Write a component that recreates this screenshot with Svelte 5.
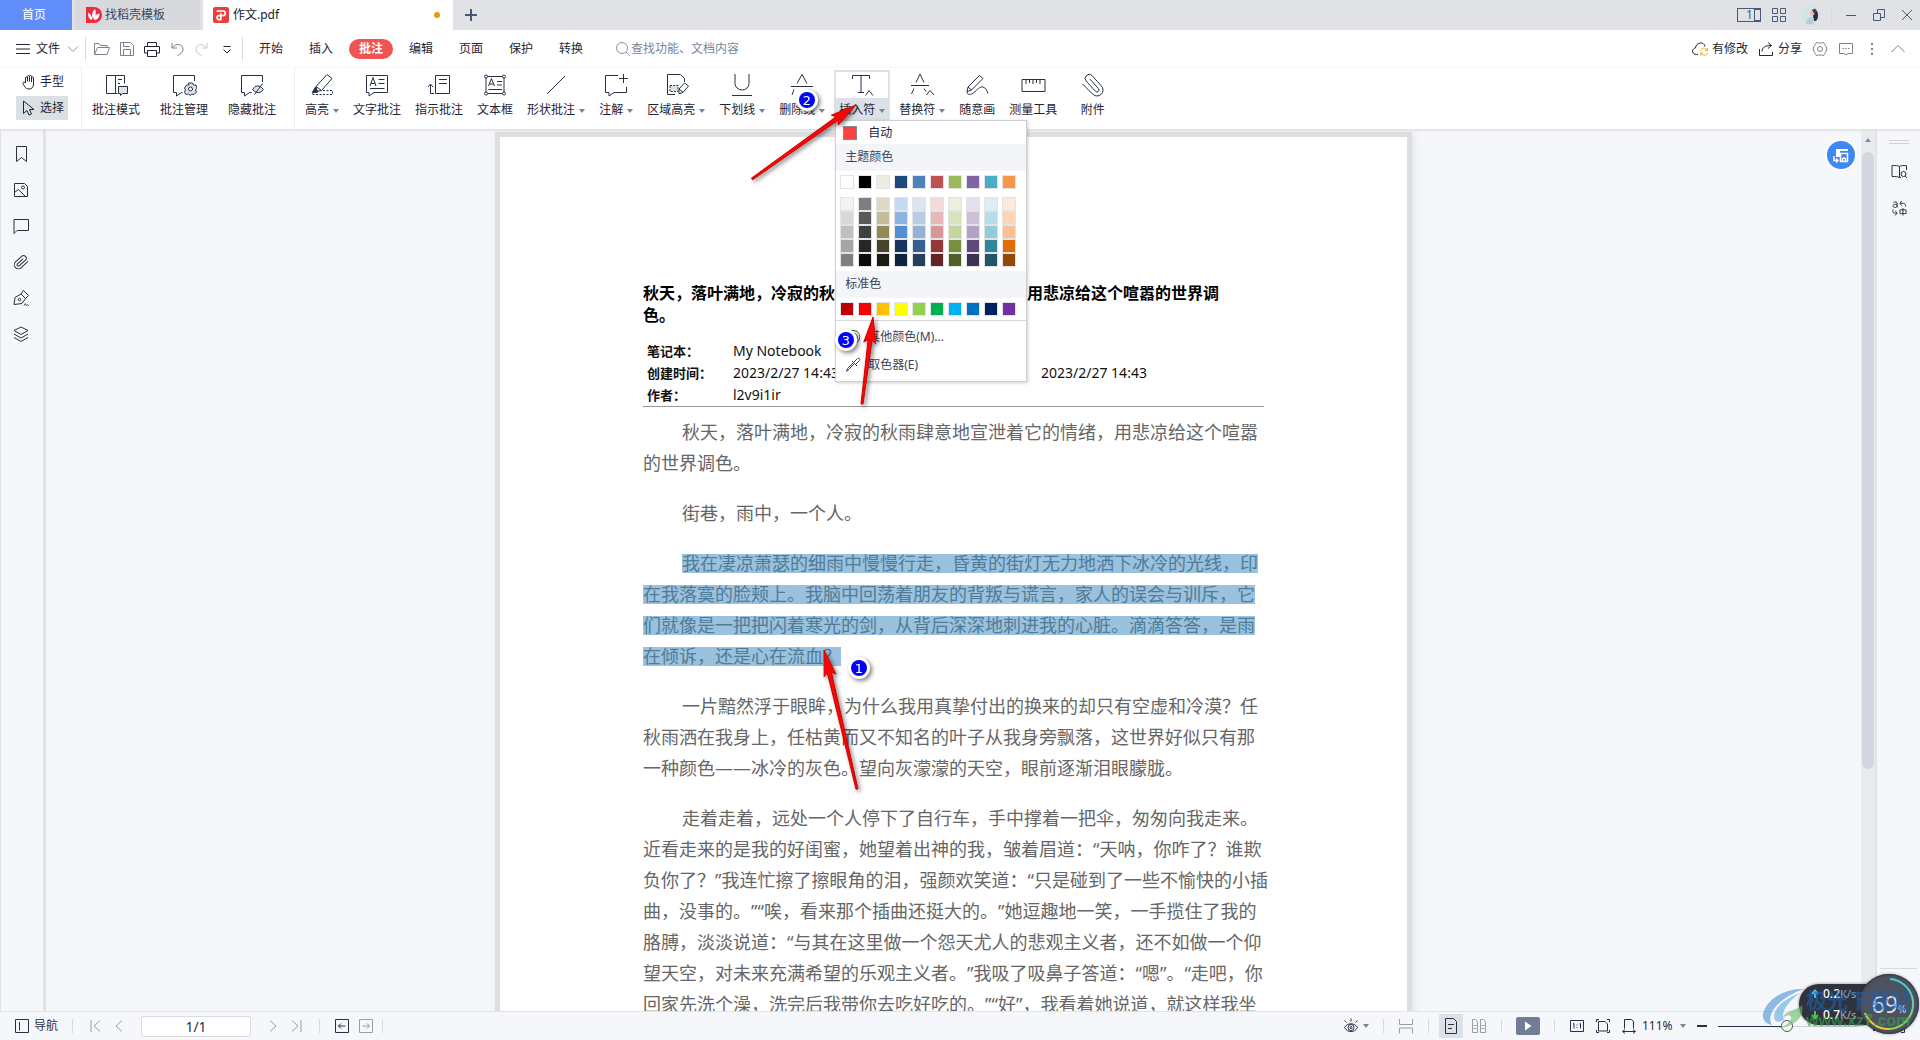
<script>
	let current = $state('批注');
	let tool = $state('选择');
	let picked = $state('插入符');
	let zoom = $state(49);

	const menus = ['开始', '插入', '批注', '编辑', '页面', '保护', '转换'];

	const modes = [
		{ name: '批注模式', icon: 'mode' },
		{ name: '批注管理', icon: 'manage' },
		{ name: '隐藏批注', icon: 'hide' }
	];

	const tools = [
		{ name: '高亮', icon: 'marker', caret: true },
		{ name: '文字批注', icon: 'textnote' },
		{ name: '指示批注', icon: 'pointnote' },
		{ name: '文本框', icon: 'textbox' },
		{ name: '形状批注', icon: 'line', caret: true },
		{ name: '注解', icon: 'addnote', caret: true },
		{ name: '区域高亮', icon: 'area', caret: true },
		{ name: '下划线', icon: 'underline', caret: true },
		{ name: '删除线', icon: 'strike', caret: true },
		{ name: '插入符', icon: 'caret', caret: true },
		{ name: '替换符', icon: 'replace', caret: true },
		{ name: '随意画', icon: 'draw' },
		{ name: '测量工具', icon: 'ruler' },
		{ name: '附件', icon: 'clip', wide: true }
	];

	const side = [
		{ name: '书签', icon: 'bookmark' },
		{ name: '缩略图', icon: 'image' },
		{ name: '批注列表', icon: 'comment' },
		{ name: '附件列表', icon: 'clipS' },
		{ name: '签名', icon: 'pen' },
		{ name: '图层', icon: 'layers' }
	];

	const theme = ['#ffffff', '#000000', '#eeece1', '#1f497d', '#4f81bd', '#c0504d', '#9bbb59', '#8064a2', '#4bacc6', '#f79646'];
	const shades = [
		['#f2f2f2', '#7f7f7f', '#ddd9c3', '#c6d9f0', '#dbe5f1', '#f2dcdb', '#ebf1dd', '#e5e0ec', '#dbeef3', '#fdeada'],
		['#d8d8d8', '#595959', '#c4bd97', '#8db3e2', '#b8cce4', '#e5b9b7', '#d7e3bc', '#ccc1d9', '#b7dde8', '#fbd5b5'],
		['#bfbfbf', '#3f3f3f', '#938953', '#548dd4', '#95b3d7', '#d99694', '#c3d69b', '#b2a2c7', '#92cddc', '#fac08f'],
		['#a5a5a5', '#262626', '#494429', '#17365d', '#366092', '#953734', '#76923c', '#5f497a', '#31859b', '#e36c09'],
		['#7f7f7f', '#0c0c0c', '#1d1b10', '#0f243e', '#244061', '#632423', '#4f6128', '#3f3151', '#205867', '#974806']
	];
	const standard = ['#c00000', '#ff0000', '#ffc000', '#ffff00', '#92d050', '#00b050', '#00b0f0', '#0070c0', '#002060', '#7030a0'];

	const paragraphs = [
		{ lines: ['秋天，落叶满地，冷寂的秋雨肆意地宣泄着它的情绪，用悲凉给这个喧嚣', '的世界调色。'] },
		{ lines: ['街巷，雨中，一个人。'] },
		{
			marked: true,
			lines: [
				'我在凄凉萧瑟的细雨中慢慢行走，昏黄的街灯无力地洒下冰冷的光线，印',
				'在我落寞的脸颊上。我脑中回荡着朋友的背叛与谎言，家人的误会与训斥，它',
				'们就像是一把把闪着寒光的剑，从背后深深地刺进我的心脏。滴滴答答，是雨',
				'在倾诉，还是心在流血？'
			]
		},
		{
			lines: [
				'一片黯然浮于眼眸，为什么我用真挚付出的换来的却只有空虚和冷漠？任',
				'秋雨洒在我身上，任枯黄而又不知名的叶子从我身旁飘落，这世界好似只有那',
				'一种颜色——冰冷的灰色。望向灰濛濛的天空，眼前逐渐泪眼朦胧。'
			]
		},
		{
			lines: [
				'走着走着，远处一个人停下了自行车，手中撑着一把伞，匆匆向我走来。',
				'近看走来的是我的好闺蜜，她望着出神的我，皱着眉道：“天呐，你咋了？谁欺',
				'负你了？”我连忙擦了擦眼角的泪，强颜欢笑道：“只是碰到了一些不愉快的小插',
				'曲，没事的。”“唉，看来那个插曲还挺大的。”她逗趣地一笑，一手揽住了我的',
				'胳膊，淡淡说道：“与其在这里做一个怨天尤人的悲观主义者，还不如做一个仰',
				'望天空，对未来充满希望的乐观主义者。”我吸了吸鼻子答道：“嗯”。“走吧，你',
				'回家先洗个澡，洗完后我带你去吃好吃的。”“好”，我看着她说道，就这样我坐'
			]
		}
	];

	const arrows = [
		{ x1: 752, y1: 179, x2: 856, y2: 105 },
		{ x1: 862, y1: 404, x2: 873, y2: 317 },
		{ x1: 857, y1: 789, x2: 824, y2: 650 }
	];
	const badges = [
		{ n: 1, x: 859, y: 668 },
		{ n: 2, x: 807, y: 100 },
		{ n: 3, x: 846, y: 340 }
	];

	// arrow outline: thin tail widening to the head
	function arrowPoints(a) {
		const len = Math.hypot(a.x2 - a.x1, a.y2 - a.y1);
		const ux = (a.x2 - a.x1) / len;
		const uy = (a.y2 - a.y1) / len;
		const at = (d, s) => `${a.x2 - ux * d - uy * s},${a.y2 - uy * d + ux * s}`;
		return [at(0, 0), at(26, 6), at(23, 2), at(len, 1), at(len, -1), at(23, -2), at(26, -6)].join(' ');
	}

	const icons = {
		mode: '<path d="M13.5 20.5H2.5v-18h9v18M11.5 2.5h9v8"/><path d="M14 6.5h4M14 10.5h2"/><path d="M14.500 13.5h9v7h-5l-2 2v-2h-2z" fill="#dde3e9"/>',
		manage: '<path d="M22.500 8V2.5h-21v17h3v3.500l5-3.500h1"/><path d="M16.500 10h4l1 2 2.500.2 1 3-1.500 1.800 1 2-2.500 2.500-2.300-.5-1.200 1.500-2-1.500-2.500.500-1.500-2.500 1-2-1-2 2-2.800 2.200-.2z" fill="#dde3e9"/><circle cx="18.500" cy="16" r="2" fill="#fff"/>',
		hide: '<path d="M22.500 9V2.500h-21v17h3v3.500l5-3.500h2"/><path d="M12.500 16.500q5-7.500 11 0q-5 6.500-11 0z" fill="#dde3e9"/><path d="M22.500 10.500l-8 11"/>',
		marker: '<path d="M6 13.500L17 1.500l5 4-10.500 12-5 1z"/><path d="M6 13.500l5.500 4"/><path d="M5.500 14L2 20l6-1z" fill="#283044"/><path d="M13 17.500h9.500v4H1" stroke-dasharray="2 1.500"/>',
		textnote: '<path d="M1.500 2.500h21v17H9l-5 3.500v-3.500H1.500z"/><path d="M5 13l3-8.500 3 8.500M6 10.500h4M13.500 6.500h6M13.500 10.500h6M5 15.500h14.500"/>',
		pointnote: '<path d="M8.500 2.500h14v18h-14zM12 6.500h8M12 10.500h8M7 20.500H3.500v-9M1 14l2.500-3L6 14"/>',
		textbox: '<path d="M3 3.500h18v17H3z"/><path d="M5.500 13l3-7.500 3 7.500M6.500 11h4M14 8.500h5M14 12h5M5.500 16.500H19"/><g fill="#fff"><circle cx="3" cy="3.500" r="1.500"/><circle cx="21" cy="3.500" r="1.500"/><circle cx="3" cy="20.500" r="1.500"/><circle cx="21" cy="20.500" r="1.500"/></g>',
		line: '<path d="M3 21L21 3"/>',
		addnote: '<path d="M14 2.500H1.500v17h3.500v3.500l5-3.500h12.500V14M15 5.500h9M19.500 1v9"/>',
		area: '<path d="M11 21.500H3.500v-20h13l4 4V9"/><path d="M6 12.500h8v6H6z" fill="#dde3e9" stroke-dasharray="2 1.200"/><path d="M15 16l5.500-6 4 3-5.500 6.500-4 1.200zM15 16l4 3.200" fill="#fff"/>',
		underline: '<path d="M5 1v9.500a7 6.500 0 0014 0V1M2 22.500h20"/>',
		strike: '<path d="M7 10.500l5-9 5 9M1 13.500h22M4 16.500L2 22M20 16.500l2 5.500"/>',
		caret: '<path d="M2.500 6V2.500h17V6M11 2.500v17M8 19.500h6M15.500 22.500l3.500-5 4 5"/>',
		replace: '<path d="M6 9.500l4-8.500 4 8.500M1 12.500h18M4 15.500L1.500 21M14 15.500l2 3M16.500 22l3.500-4.500 4 4.500"/>',
		draw: '<path d="M3 14L14.500 2.500l3.500 3L6.500 17 2 18.500zM3 14l3.500 3"/><path d="M2 18.500c0 4 4 3.500 7 1s6-6.500 9-5.500 3.500 3 5 6.500"/>',
		ruler: '<path d="M1 6.500h23v12H1zM5 7v4M8.500 7v3M12 7v4M15.500 7v3M19 7v4"/>',
		clip: '<path transform="matrix(-1 0 0 1 25 0)" d="M22.400 11.050l-10.150 10.190a6 6 0 01-8.490-8.490l9.190-10.190a4 4 0 015.660 5.660l-9.200 10.190a2 2 0 01-2.830-2.830l8.490-9.480"/>'
	};

	// 16px set
	const small = {
		hand: '<path d="M4.500 9V4a1 1 0 012 0V2.500a1 1 0 012 0v0a1 1 0 012 0V4a1 1 0 012 0v6c0 3-1.500 5-4.500 5S4 13.500 2 9.500c-.500-1.500 1.500-2 2.500-.500zM6.500 3v4.500M8.500 3v4.500M10.500 4v4"/>',
		arrow: '<path d="M2.500 1v12.500l3.500-3 2 4.500 2.500-1-2-4.500h4.500z"/>',
		folder: '<path d="M.500 13V2.500h4.500l1.500 2h6.500v2M.500 13.500l3-7h12l-2.500 7z"/>',
		save: '<path d="M1.500 1.500h10l3 3v10h-13zM4.500 14V8.500h7V14M4.500 2v3.500h6"/>',
		print: '<path d="M3.500 5V1.500h9V5M3.500 12H.500V5.500h15V12h-3M3.500 9.500h9v6h-9z"/>',
		undo: '<path d="M3 2v5h5M3 7c4-5.500 11-4 11 1 0 3-2 5-5.500 6.500"/>',
		redo: '<path d="M13 2v5H8M13 7C9 1.500 2 3 2 8c0 3 2 5 5.500 6.500"/>',
		more: '<path d="M4.500 5.500h7M4.500 8.500l3.500 3.500 3.500-3.500"/>',
		search: '<circle cx="7" cy="7" r="5.500"/><path d="M11 11l4 4"/>',
		cloud: '<path d="M6 13.500H4.500c-5 0-5-6-1-6.500C4 1 12 0 13 5.500"/><path d="M8.500 9.500c1-3 5.500-3 6.500-.500M15.500 7v2.500H13M15.500 12c-1 3-5.500 3-6.500.500M8.500 14.500V12H11" stroke="#f5a623"/>',
		share: '<path d="M1.500 8v6.500h13V11M4 10.500c0-4 3-6 9-6M10 1.500l3.500 3-3.500 3"/>',
		gear: '<path d="M4.500 1.500l2 .500h3l2-.500 2 3 1.500 3.500-1.500 3.500-2 3-2-.500h-3l-2 .500-2-3L1 8l1.500-3.500z"/><circle cx="8" cy="8" r="2.500"/>',
		talk: '<path d="M1.500 2.500h13v10H10l-2 1.500-2-1.500H1.500zM4.500 7.500h1.500M7.200 7.500h1.500M10 7.500h1.500"/>',
		dots: '<path d="M8 2v2M8 7v2M8 12v2" stroke-width="2"/>',
		up: '<path d="M1.500 11L8 4.500l6.500 6.500"/>',
		bookmark: '<path d="M3.500.500h10v15l-5-4-5 4z"/>',
		image: '<path d="M1.500 1.500h10l3 3v10h-13zM2 10l3.500-2.500 7 7"/><circle cx="10" cy="5.500" r="1.500"/>',
		comment: '<path d="M1 1.500h14.500v11H4L1 15.500z"/>',
		clipS: '<path transform="scale(.67)" stroke-width="1.500" d="M22.400 11.050l-10.150 9.190a6 6 0 01-8.490-8.490l9.190-8.190a4 4 0 015.660 5.660l-9.200 8.190a2 2 0 01-2.830-2.830l8.490-7.480"/>',
		pen: '<path d="M1 14.500l1-7 6-3.500 4.500 4.500-3.500 5zM8 4l2.500-3.500 5 5L12.500 8.500M11 15.500c2-4 1.500 0 2.500 0s1-2 2 0"/><circle cx="6.500" cy="9.500" r="1.200"/>',
		layers: '<path d="M8 1l7 3.500-7 4-7-4zM1 8l7 4 7-4M1 11.500l7 4 7-4"/>',
		book: '<path d="M8.500 13.500c-2-1-4-1-7.500-1V1.500c3.500 0 6 0 7.500 1zM8.500 2.500C10 1.500 12 1.500 15.500 1.500V6M8.500 13.500h1.500"/><circle cx="12.500" cy="10" r="2.500"/><path d="M14 12l2 2"/>',
		nav: '<path d="M1.500 1.500h13v13h-13zM5.500 4v8.500"/>',
		first: '<path d="M4 2v12M13 2.500L7 8l6 5.500"/>',
		prev: '<path d="M11 2.500L5 8l6 5.500"/>',
		next: '<path d="M5 2.500L11 8l-6 5.500"/>',
		last: '<path d="M12 2v12M3 2.500L9 8l-6 5.500"/>',
		back: '<path d="M1.500 1.500h13v13h-13zM11.500 8h-7M7 5.500L4.500 8 7 10.500"/>',
		forward: '<path d="M1.500 1.500h13v13h-13zM4.500 8h7M9 5.500l2.500 2.500L9 10.500"/>',
		eye: '<path d="M1.500 9.500c3-5 10-5 13 0-3 5.500-10 5.500-13 0zM8 3.500V.500M3.500 4.500l-2-2M12.500 4.500l2-2"/><circle cx="8" cy="9.500" r="3"/><circle cx="8" cy="9.500" r="1"/>',
		breaks: '<path d="M1.500 1v5.500h13V1M1.500 15.500V10h13v5.500"/>',
		single: '<path d="M2.500.500h8l3 3v12h-11zM5 6.500h6M5 10.500h4"/>',
		double: '<path d="M1.500 1.500h3l2 2v11h-5zM9.500 1.500h3l2 2v11h-5zM2.500 7.500h3M2.500 10.500h3M10.500 7.500h3M10.500 10.500h3"/>',
		actual: '<path d="M1.500 2.500h13v11h-13zM4 6l1-.500v5M10.500 6l1-.500v5M8 6.500v1M8 9v1"/>',
		fit: '<path d="M3.500 3.500h6.500l2.500 2.500v7h-9zM1.500 4V1.500H4M12 1.500h2.500V4M1.500 12v2.500H4M12 14.500h2.500V12"/>',
		width: '<path d="M3.500 10.500v-9h7l2 2v7M2 13.500h12M4 11.500l-2.500 2L4 15.500M12 11.500l2.500 2-2.500 2"/>',
		minus: '<path d="M3 8h10" stroke-width="2"/>',
		plus: '<path d="M3 8h10M8 3v10" stroke-width="2"/>',
		full: '<path d="M1.500 5V1.500H5M11 1.500h3.500V5M1.500 11v3.500H5M11 14.500h3.500V11M9 7l4-4M7 9l-4 4"/>',
		grid: '<path d="M1.500 1.500h5v5h-5zM9.500 1.500h5v5h-5zM1.500 9.500h5v5h-5zM9.500 9.500h5v5h-5z"/>',
		min: '<path d="M3 8.500h10"/>',
		restore: '<path d="M2.500 6.500h7v7h-7zM6.500 6V2.500h7v8H10"/>',
		close: '<path d="M3 3l10 10M13 3L3 13"/>',
		palette: '<path d="M8 1.500c9 0 8.500 12 1 13-2 0-.500-2.500-2-3.500S1.500 12 1.500 8 4 1.500 8 1.500z"/><path d="M9.500 4.500c3 1 3.500 4 2 6.500"/>',
		dropper: '<path d="M9.500 6.500l-8 8 1-3 6-6M7 4l5 5M8.500 5.500l4-4c1.500-1 3 .500 2 2l-4 4"/>'
	};
</script>

{#snippet big(name)}
	<svg class="big" viewBox="0 0 25 24">{@html icons[name]}</svg>
{/snippet}

{#snippet ico(name)}
	<svg class="ico" viewBox="0 0 16 16">{@html small[name]}</svg>
{/snippet}

{#snippet swatches(colors)}
	<div class="swatches">
		{#each colors as color}
			<button class="swatch" aria-label={color} style="background: {color}"></button>
		{/each}
	</div>
{/snippet}

<div class="app">
	<header class="tabs">
		<button class="home">首页</button>
		<button class="tab store">
			<svg class="logo" viewBox="0 0 16 16">
				<path d="M0 0h8a8 8 0 010 16H0z" fill="#f3283c" />
				<path d="M6 13C1 11 2 7 2.500 5.500 5 7 6.500 10 6 13zM7 12C5 7 7 4 9 2c1.500 4 1 7-2 10zM8 13c0-4 2-6 5.500-6.500C13.500 10 12 13 8 13z" fill="#fff" />
			</svg>
			找稻壳模板
		</button>
		<button class="tab active">
			<svg class="logo" viewBox="0 0 16 16">
				<rect width="16" height="16" rx="2" fill="#e8403a" />
				<path d="M4.500 5V4h5.500a2.300 2.300 0 010 4.600H6a2 2 0 000 4h1.800V6" fill="none" stroke="#fff" stroke-width="1.600" />
			</svg>
			作文.pdf
			<i class="unsaved"></i>
		</button>
		<button class="new" aria-label="新建"><svg class="ico" viewBox="0 0 16 16"><path d="M2 8h12M8 2v12" stroke-width="2" /></svg></button>
		<div class="window">
			<button class="layout" aria-label="窗口"><span>1</span><i></i></button>
			<button aria-label="应用">{@render ico('grid')}</button>
			<button aria-label="账号">
				<svg class="avatar" viewBox="0 0 20 20">
					<circle cx="10" cy="10" r="10" fill="#d3e3e8" />
					<path d="M11 6c3-3 6 0 6 4s-1 6-4 6z" fill="#332b35" />
					<circle cx="11" cy="8" r="2.500" fill="#e8c4b4" />
					<path d="M5 19c0-5 3-7 6-7l2 2-1 5.500z" fill="#b4cdd8" />
					<path d="M11 5l3-1.500 2 3-3 2z" fill="#4d3b3e" />
				</svg>
			</button>
			<i class="sep"></i>
			<button class="spaced" aria-label="最小化">{@render ico('min')}</button>
			<button class="spaced" aria-label="还原">{@render ico('restore')}</button>
			<button class="spaced" aria-label="关闭">{@render ico('close')}</button>
		</div>
	</header>

	<nav class="menubar">
		<button class="file">
			<svg class="ico" viewBox="0 0 16 16"><path d="M1 3.500h14M1 8h14M1 12.500h14" /></svg>
			文件
			<svg class="chev" viewBox="0 0 16 16"><path d="M3 5.500l5 5 5-5" /></svg>
		</button>
		<i class="sep"></i>
		<div class="quick">
			<button class="grey" aria-label="打开">{@render ico('folder')}</button>
			<button class="grey" aria-label="保存">{@render ico('save')}</button>
			<button aria-label="打印">{@render ico('print')}</button>
			<button class="grey" aria-label="撤销">{@render ico('undo')}</button>
			<button class="off" aria-label="恢复">{@render ico('redo')}</button>
			<button aria-label="更多">{@render ico('more')}</button>
		</div>
		<i class="sep"></i>
		<div class="menus">
			{#each menus as m}
				<button class:on={current === m} onclick={() => (current = m)}>{m}</button>
			{/each}
		</div>
		<label class="search">
			{@render ico('search')}
			<input type="text" placeholder="查找功能、文档内容" />
		</label>
		<div class="right">
			<button>{@render ico('cloud')}有修改</button>
			<button>{@render ico('share')}分享</button>
			<button class="grey" aria-label="设置">{@render ico('gear')}</button>
			<button class="grey" aria-label="反馈">{@render ico('talk')}</button>
			<button class="grey" aria-label="更多选项">{@render ico('dots')}</button>
			<button class="grey" aria-label="收起">{@render ico('up')}</button>
		</div>
	</nav>

	<div class="ribbon">
		<div class="pointer">
			<button class:on={tool === '手型'} onclick={() => (tool = '手型')}>{@render ico('hand')}手型</button>
			<button class:on={tool === '选择'} onclick={() => (tool = '选择')}>{@render ico('arrow')}选择</button>
		</div>
		<div class="group modes">
			{#each modes as m}
				<button class="item">{@render big(m.icon)}<span>{m.name}</span></button>
			{/each}
		</div>
		<div class="group">
			{#each tools as t}
				<div class="holder">
					<button class="item" class:wide={t.wide} class:on={picked === t.name}>
						{@render big(t.icon)}
						<span>{t.name}{#if t.caret}<i class="caret"></i>{/if}</span>
					</button>
					{#if t.name === picked}
						<div class="dropdown">
							<button class="auto"><i></i>自动</button>
							<div class="head">主题颜色</div>
							<div class="block">{@render swatches(theme)}</div>
							<div class="block shades">
								{#each shades as row}
									{@render swatches(row)}
								{/each}
							</div>
							<div class="head">标准色</div>
							<div class="block">{@render swatches(standard)}</div>
							<div class="extra">
								<button>{@render ico('palette')}其他颜色(M)...</button>
								<button>{@render ico('dropper')}取色器(E)</button>
							</div>
						</div>
					{/if}
				</div>
			{/each}
		</div>
	</div>

	<main>
		<aside class="left">
			{#each side as s}
				<button aria-label={s.name}>{@render ico(s.icon)}</button>
			{/each}
		</aside>

		<section class="canvas">
			<article class="page">
				<h1>秋天，落叶满地，冷寂的秋雨肆意地宣泄着它的情绪，用悲凉给这个喧嚣的世界调<br />色。</h1>
				<table>
					<tbody>
						<tr><th>笔记本：</th><td>My Notebook</td><th></th><td></td></tr>
						<tr><th>创建时间：</th><td>2023/2/27 14:43</td><th>更新时间：</th><td>2023/2/27 14:43</td></tr>
						<tr><th>作者：</th><td>l2v9i1ir</td><th></th><td></td></tr>
					</tbody>
				</table>
				<hr />
				{#each paragraphs as p}
					<p>
						{#each p.lines as line}
							<span class="line"><span class:marked={p.marked}>{line}</span></span>
						{/each}
					</p>
				{/each}
			</article>
			<button class="convert" aria-label="转换">
				<svg viewBox="0 0 28 28">
					<path d="M9 8h12v2h-8v6H9z" fill="#fff" />
					<path d="M13.500 12.500h7v8h-7zM15.500 20v-2l1.500-1 1.500 1v2" fill="none" stroke="#fff" stroke-width="1.500" />
					<path d="M7 15v4.500h4M9 17.500l2 2-2 2" fill="none" stroke="#fff" stroke-width="1.500" />
				</svg>
			</button>
		</section>

		<div class="scroll"><i class="arrow-up"></i><i class="thumb"></i></div>

		<aside class="rightbar">
			<i class="grip"></i>
			<button aria-label="查阅">{@render ico('book')}</button>
			<button aria-label="翻译">
				<svg class="translate" viewBox="0 0 16 17">
					<path d="M2 2.500c2-1 4-.5 4 1V8M6 4.500H3.500c-2.500 0-2.500 3.500 0 3.500C5 8 6 7 6 5.500M9 3.500h3.500c2 0 2.500 1.500 2.500 3.500M11 1L9 3.500 11 6M1.500 10v2.500c0 1.500 1 1.500 4 1.500M4 11.500L6 14l-2 2.500M9 10.500h6.500v4H9zM12.200 8.500v8" />
				</svg>
			</button>
			<i class="rule"></i>
		</aside>
	</main>

	<footer>
		<button class="navi">{@render ico('nav')}导航</button>
		<i class="sep"></i>
		<div class="pair grey">
			<button aria-label="第一页">{@render ico('first')}</button>
			<button aria-label="上一页">{@render ico('prev')}</button>
		</div>
		<input class="pageno" type="text" aria-label="页码" value="1/1" />
		<div class="pair grey">
			<button aria-label="下一页">{@render ico('next')}</button>
			<button aria-label="最后一页">{@render ico('last')}</button>
		</div>
		<i class="sep"></i>
		<div class="pair">
			<button aria-label="后退">{@render ico('back')}</button>
			<button class="grey" aria-label="前进">{@render ico('forward')}</button>
			<i class="sep"></i>
		</div>

		<div class="view">
			<button aria-label="护眼">{@render ico('eye')}<i class="caret"></i></button>
			<i class="sep"></i>
			<button class="grey" aria-label="连续">{@render ico('breaks')}</button>
			<i class="sep"></i>
			<div class="pair">
				<button class="on" aria-label="单页">{@render ico('single')}</button>
				<button class="grey" aria-label="双页">{@render ico('double')}</button>
			</div>
			<i class="sep"></i>
			<button class="play" aria-label="播放"><svg viewBox="0 0 24 18"><path d="M9 4.500l6.500 4.500L9 13.500z" fill="#fff" /></svg></button>
			<i class="sep"></i>
			<div class="pair fits">
				<button aria-label="实际大小">{@render ico('actual')}</button>
				<button aria-label="适合页面">{@render ico('fit')}</button>
				<button aria-label="适合宽度">{@render ico('width')}</button>
			</div>
		</div>
		<div class="pair zoom">
			<label class="percent">
				<select aria-label="缩放"><option>111%</option></select>
				<i class="caret"></i>
			</label>
			<button aria-label="缩小">{@render ico('minus')}</button>
			<input type="range" aria-label="缩放比例" min="0" max="100" bind:value={zoom} />
			<button aria-label="放大">{@render ico('plus')}</button>
			<button aria-label="全屏">{@render ico('full')}</button>
		</div>
	</footer>

	<!-- numbered steps -->
	<svg class="steps">
		<defs>
			<linearGradient id="ring" x1="0" y1="0" x2="0" y2="1">
				<stop offset="0" stop-color="#3fd0d8" />
				<stop offset="1" stop-color="#7ed957" />
			</linearGradient>
		</defs>
		{#each arrows as a}
			<polygon points={arrowPoints(a)} />
		{/each}
		{#each badges as b}
			<circle class="rim" cx={b.x} cy={b.y} r="11" />
			<circle cx={b.x} cy={b.y} r="8" />
			<text x={b.x} y={b.y + 5}>{b.n}</text>
		{/each}
	</svg>

	<!-- network speed ball and site mark -->
	<div class="float">
		<div class="speed">
			<div>
				<svg viewBox="0 0 8 10"><path d="M4 9V2M1 5l3-3.500L7 5" stroke="#4db8f0" /></svg>
				<b>0.2</b><small>K/s</small>
			</div>
			<div>
				<svg viewBox="0 0 8 10"><path d="M4 1v7M1 5l3 3.500L7 5" stroke="#4cc24c" /></svg>
				<b>0.7</b><small>K/s</small>
			</div>
		</div>
		<div class="ball">
			<svg viewBox="0 0 60 60">
				<path d="M31 5a25 25 0 0113 45" stroke="url(#ring)" />
				<path d="M44 50a25 25 0 01-14 5" stroke="#9bd64a" />
				<path d="M30 55A25 25 0 016 39" stroke="#f3c53c" />
			</svg>
			<span>69</span><small>%</small>
		</div>
		<div class="mark">
			<svg viewBox="0 0 44 42">
				<path d="M42 1C22 0 4 12 1 26c-1 6 3 10 9 11-6-8 3-26 32-36z" fill="#4a90d9" />
				<path d="M38 5C22 11 12 20 12 29c0 5 5 6 10 3-4-8 4-18 16-27z" fill="#5aa9e0" />
				<path d="M40 17c3 12-7 22-27 24 12-3 17-8 16-12-1-3-5-2-8 1 2-8 16-8 19-13z" fill="#67b96a" />
			</svg>
			<div>
				<strong>极光下载站</strong>
				<em>www.xz7.com</em>
			</div>
		</div>
	</div>
</div>

<style>
	:global(body) {
		margin: 0;
		overflow: hidden;
	}
	.app {
		position: relative;
		display: flex;
		flex-direction: column;
		height: 100vh;
		background: #f5f7fa;
		color: #1f2536;
		font-family: 'Noto Sans', 'Noto Sans CJK SC', sans-serif;
		font-size: 12px;
		line-height: 16px;
		text-spacing-trim: space-all;
	}
	button,
	input,
	select {
		margin: 0;
		padding: 0;
		border: 0;
		background: none;
		color: inherit;
		font: inherit;
	}
	button {
		display: flex;
		align-items: center;
		flex: none;
	}
	svg {
		display: block;
		flex: none;
	}
	.ico,
	.big,
	.chev,
	.translate {
		fill: none;
		stroke: currentColor;
		width: 16px;
		height: 16px;
	}
	.big {
		width: 25px;
		height: 24px;
		color: #283044;
	}
	.sep {
		flex: none;
		width: 1px;
		height: 20px;
		background: #d8dae0;
	}
	.grey {
		color: #7b8190;
	}
	.off {
		color: #c5c8d0;
	}
	.caret {
		display: inline-block;
		flex: none;
		margin-left: 4px;
		border: 3px solid transparent;
		border-top: 4px solid #7a839c;
		border-bottom: 0;
		vertical-align: middle;
	}

	/* tab strip */
	.tabs {
		display: flex;
		align-items: center;
		gap: 3px;
		height: 30px;
		flex: none;
		background: #e1e2e6;
	}
	.tabs > button {
		height: 30px;
	}
	.home {
		box-sizing: border-box;
		width: 72px;
		padding-left: 22px;
		background: #628efa;
		color: #fff;
	}
	.tab {
		gap: 4px;
		box-sizing: border-box;
		padding: 0 11px;
		background: #d8d9dd;
		color: #3f465a;
	}
	.store {
		width: 125px;
		gap: 3px;
	}
	.tab.active {
		width: 250px;
		padding: 0 13px 0 10px;
		background: #fff;
		color: #14181f;
	}
	.logo {
		width: 16px;
		height: 16px;
	}
	.unsaved {
		width: 6px;
		height: 6px;
		margin-left: auto;
		border-radius: 50%;
		background: #e69a05;
	}
	.new {
		padding: 0 7px;
		color: #4a5878;
	}
	.window {
		display: flex;
		align-items: center;
		gap: 10px;
		margin-left: auto;
		padding-right: 4px;
		color: #4a5878;
	}
	.window .spaced {
		width: 18px;
		justify-content: center;
	}
	.layout {
		box-sizing: border-box;
		width: 24px;
		height: 14px;
		padding-left: 8px;
		border: 1px solid #4a5878;
	}
	.layout i {
		width: 5px;
		height: 10px;
		margin-left: auto;
		border: 1px solid #4a5878;
		border-right: 0;
	}
	.avatar {
		width: 20px;
		height: 20px;
		margin-left: 4px;
	}

	/* menu bar */
	.menubar {
		display: flex;
		align-items: center;
		flex: none;
		height: 38px;
		padding: 0 14px 0 15px;
		background: #fff;
	}
	.file {
		gap: 5px;
		padding-right: 4px;
	}
	.file .chev {
		color: #8f95a3;
	}
	.menubar > .sep {
		height: 24px;
	}
	.quick {
		display: flex;
		gap: 9px;
		padding: 0 7px 0 8px;
	}
	.menus {
		display: flex;
		gap: 6px;
		padding-left: 6px;
	}
	.menus button {
		justify-content: center;
		width: 44px;
		height: 20px;
		border-radius: 10px;
	}
	.menus .on {
		background: #ed5452;
		color: #fff;
		font-weight: bold;
	}
	.search {
		display: flex;
		align-items: center;
		margin-left: 22px;
		color: #8a93a8;
	}
	.search input {
		width: 150px;
		outline: 0;
	}
	.search input::placeholder {
		color: #7c859b;
		opacity: 1;
	}
	.right {
		display: flex;
		gap: 10px;
		margin-left: auto;
	}
	.right button {
		gap: 4px;
	}

	/* ribbon */
	.ribbon {
		position: relative;
		z-index: 2;
		display: flex;
		flex: none;
		height: 61px;
		background: #fff;
		box-shadow: 0 1px 3px #d4d7dc;
	}
	.pointer {
		display: flex;
		flex-direction: column;
		gap: 2px;
		box-sizing: border-box;
		width: 82px;
		padding: 2px 13px 0 16px;
		border-right: 1px solid #eceef1;
	}
	.pointer button {
		gap: 3px;
		height: 24px;
		padding: 0 4px 0 5px;
	}
	.pointer .on {
		background: #dbe0e5;
	}
	.group {
		display: flex;
		gap: 4px;
		padding: 2px 0 0 5px;
	}
	.modes {
		gap: 10px;
		padding: 2px 13px 0 5px;
		border-right: 1px solid #eceef1;
	}
	.holder {
		position: relative;
	}
	.item {
		flex-direction: column;
		box-sizing: border-box;
		height: 50px;
		padding: 3px 5px 0;
		white-space: nowrap;
	}
	.item span {
		margin-top: 5px;
	}
	.item.wide {
		padding: 3px 14px 0;
	}
	.item.on {
		background: linear-gradient(#fff, #fff) 2px 2px / 52px 26px no-repeat #dbe1e6;
	}

	.dropdown {
		position: absolute;
		top: 50px;
		left: 1px;
		box-sizing: border-box;
		width: 192px;
		border: 1px solid #cdd0d4;
		background: #fff;
		box-shadow: 1px 1px 3px rgba(0, 0, 0, 0.2);
	}
	.auto {
		gap: 11px;
		height: 23px;
		padding: 0 7px;
	}
	.auto i {
		width: 12px;
		height: 12px;
		border: 1px solid #888;
		background: #fa4244;
	}
	.head {
		height: 27px;
		padding-left: 9px;
		background: #f3f5f8;
		color: #3c455c;
		line-height: 26px;
	}
	.block {
		padding: 4px;
	}
	.swatches {
		display: flex;
		gap: 4px;
	}
	.swatch {
		box-sizing: border-box;
		width: 14px;
		height: 14px;
		border: 1px solid #e1e3e7;
	}
	.extra {
		padding: 2px 0;
		border-top: 1px solid #d6d8dc;
		color: #3c455c;
	}
	.extra button {
		gap: 7px;
		height: 28px;
		padding-left: 9px;
	}

	/* document */
	main {
		display: flex;
		flex: 1;
		min-height: 0;
	}
	.left {
		display: flex;
		flex-direction: column;
		gap: 20px;
		box-sizing: border-box;
		width: 46px;
		padding: 17px 0 0 12px;
		border-left: 1px solid #e1e3e9;
		border-right: 3px solid #e1e3e9;
		color: #283044;
	}
	.canvas {
		position: relative;
		flex: 1;
		overflow: hidden;
	}
	.page {
		box-sizing: border-box;
		max-width: 907px;
		margin: 8px auto 0;
		padding: 145px 143px 0;
		background: #fff;
		box-shadow: 0 0 0 5px #dcdee0, 2px 0 8px 4px #dcdee0;
	}
	h1 {
		margin: 0 0 14px;
		color: #000;
		font-size: 16px;
		font-weight: bold;
		line-height: 22px;
		white-space: nowrap;
	}
	table {
		border-spacing: 0;
		color: #111;
		font-size: 14px;
		line-height: 22px;
	}
	th {
		width: 86px;
		padding: 0 0 0 4px;
		box-sizing: border-box;
		font-size: 13px;
		text-align: left;
	}
	th:first-child {
		width: 90px;
	}
	td {
		width: 222px;
		padding: 0;
	}
	tr {
		height: 22px;
	}
	hr {
		height: 1px;
		margin: 0 0 10px;
		border: 0;
		background: #999;
	}
	p {
		margin: 0 0 19px;
		color: #666;
		font-size: 18px;
		line-height: 31px;
		text-indent: 39px;
		white-space: nowrap;
	}
	.line {
		display: block;
	}
	.line + .line {
		text-indent: 0;
	}
	.marked {
		display: inline-block;
		height: 19px;
		background: #9ac1dd;
		color: #4f7c99;
		line-height: 19px;
		text-indent: 0;
	}
	.convert {
		position: absolute;
		top: 10px;
		right: 4px;
		border: 2px solid #fff;
		border-radius: 50%;
		background: #3f87f2;
	}
	.convert svg {
		width: 28px;
		height: 28px;
	}
	.scroll {
		display: flex;
		flex-direction: column;
		align-items: center;
		width: 14px;
		background: #e9ebf0;
	}
	.arrow-up {
		margin: 9px 0 10px;
		border: 3px solid transparent;
		border-top: 0;
		border-bottom: 4px solid #7a8cae;
	}
	.thumb {
		width: 12px;
		height: 70%;
		border-radius: 6px;
		background: #d4d7e0;
	}
	.rightbar {
		display: flex;
		flex-direction: column;
		align-items: center;
		gap: 20px;
		width: 43px;
		padding-top: 11px;
		border-left: 2px solid #e1e3e9;
		color: #283044;
	}
	.grip {
		width: 20px;
		height: 2px;
		border: 1px solid #cfd2d8;
		border-width: 1px 0;
	}
	.rule {
		width: 37px;
		height: 1px;
		margin: auto 0 42px;
		background: #d8dae0;
	}

	/* status bar */
	footer {
		display: flex;
		align-items: center;
		gap: 14px;
		flex: none;
		height: 28px;
		padding: 0 14px;
		border-top: 1px solid #e1e3e7;
		color: #283044;
	}
	footer .grey {
		color: #9a9da6;
	}
	footer .sep {
		height: 14px;
	}
	.navi {
		gap: 4px;
	}
	.pair {
		display: flex;
		align-items: center;
		gap: 8px;
	}
	.pageno {
		box-sizing: border-box;
		width: 110px;
		height: 21px;
		border: 1px solid #dadcdf;
		border-radius: 2px;
		background: #fff;
		font-size: 14px;
		text-align: center;
	}
	.view {
		display: flex;
		align-items: center;
		gap: 14px;
		margin-left: auto;
	}
	.view .on {
		margin-left: -4px;
		padding: 4px;
		background: #dbe1e7;
	}
	.play {
		border-radius: 2px;
		background: #717d95;
	}
	.play svg {
		width: 24px;
		height: 18px;
	}
	.fits {
		gap: 10px;
	}
	.zoom {
		margin-left: -9px;
	}
	.percent {
		display: flex;
		align-items: center;
		width: 44px;
	}
	.percent select {
		appearance: none;
		width: 34px;
	}
	input[type='range'] {
		appearance: none;
		width: 140px;
		height: 12px;
		background: linear-gradient(90deg, #283044 50%, #c9cdd6 50%) center / 100% 1px no-repeat;
	}
	input[type='range']::-webkit-slider-thumb {
		appearance: none;
		box-sizing: border-box;
		width: 12px;
		height: 12px;
		border: 1px solid #555;
		border-radius: 50%;
		background: #f5f7fa;
	}

	.steps {
		position: absolute;
		z-index: 3;
		inset: 0;
		width: 100%;
		height: 100%;
		pointer-events: none;
		filter: drop-shadow(2px 2px 2px rgba(0, 0, 0, 0.5));
	}
	.steps polygon {
		fill: #fa0606;
		stroke: #c00;
	}
	.steps circle {
		fill: #0303fa;
	}
	.steps .rim {
		fill: #fff;
	}
	.steps text {
		fill: #fff;
		font-family: 'DejaVu Sans', sans-serif;
		font-size: 13px;
		text-anchor: middle;
	}

	.float {
		position: absolute;
		z-index: 4;
		right: 1px;
		bottom: 6px;
		display: flex;
		align-items: center;
	}
	.speed {
		box-sizing: border-box;
		width: 84px;
		height: 41px;
		margin-right: -24px;
		padding-left: 12px;
		border-radius: 20px 0 0 20px;
		background: #2f333d;
		color: #fff;
		box-shadow: 0 0 3px rgba(0, 0, 0, 0.5);
	}
	.speed div {
		display: flex;
		align-items: center;
		height: 21px;
	}
	.speed svg {
		width: 8px;
		height: 10px;
		margin-right: 4px;
		fill: none;
		stroke-width: 2;
	}
	.speed small {
		color: #a5a9b3;
		font-size: 11px;
	}
	.speed b {
		font-weight: 500;
	}
	.ball {
		position: relative;
		display: flex;
		align-items: center;
		justify-content: center;
		width: 60px;
		height: 60px;
		border-radius: 50%;
		background: #4d5261;
		color: #d5e4f5;
		box-shadow: inset 0 0 2px 1px #32353f, 0 0 3px rgba(0, 0, 0, 0.4);
	}
	.ball svg {
		position: absolute;
		inset: 0;
		fill: none;
		stroke-width: 2;
	}
	.ball span {
		font-size: 23px;
	}
	.ball small {
		margin-top: 10px;
		font-size: 10px;
	}
	.mark {
		position: absolute;
		right: 8px;
		bottom: 4px;
		display: flex;
		align-items: flex-end;
		opacity: 0.6;
		white-space: nowrap;
	}
	.mark svg {
		width: 44px;
		height: 42px;
	}
	.mark div {
		display: flex;
		flex-direction: column;
	}
	.mark strong {
		color: #1d62b0;
		font-size: 21px;
		line-height: 24px;
	}
	.mark em {
		color: #35ad45;
		font: bold 16px / 18px 'Liberation Sans', sans-serif;
	}
</style>
